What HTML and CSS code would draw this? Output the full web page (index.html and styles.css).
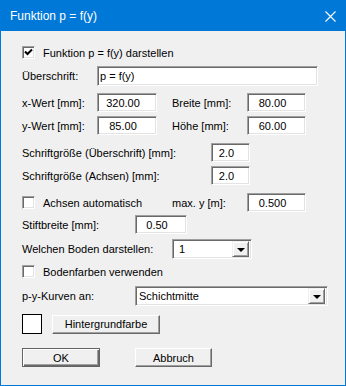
FILE: index.html
```html
<!DOCTYPE html>
<html>
<head>
    <title>Funktion p = f(y)</title>
    <meta http-equiv="content-type" content="text/html; charset=UTF-8"/>
    <link rel="stylesheet" href="styles.css">
</head>
<body>
    <div class="dialog">
        <div class="titlebar">
            <span class="title">Funktion p = f(y)</span>
            <svg class="close" width="11" height="11" viewBox="0 0 11 11">
                <path d="M0.5 0.5 L10.5 10.5 M10.5 0.5 L0.5 10.5" stroke="#fff" stroke-width="1.1" fill="none"/>
            </svg>
        </div>
        <div class="content">
            <div class="row r_check1">
                <span class="check"><svg width="9" height="9" viewBox="0 0 9 9"><path d="M1 3.5 L3.5 6 L8 1.5" stroke="#000" stroke-width="2" fill="none"/></svg></span>
                <span>Funktion p = f(y) darstellen</span>
            </div>
            <div class="row r_head">
                <span class="lbl w75">Überschrift:</span>
                <span class="field f_head">p = f(y)</span>
            </div>
            <div class="row r_x">
                <span class="lbl w75">x-Wert [mm]:</span>
                <span class="field num f60">320.00</span>
                <span class="lbl w75 gap15">Breite [mm]:</span>
                <span class="field num f59">80.00</span>
            </div>
            <div class="row r_y">
                <span class="lbl w75">y-Wert [mm]:</span>
                <span class="field num f60">85.00</span>
                <span class="lbl w75 gap15">Höhe [mm]:</span>
                <span class="field num f59">60.00</span>
            </div>
            <div class="row r_s1">
                <span class="lbl w189">Schriftgröße (Überschrift) [mm]:</span>
                <span class="field num f39">2.0</span>
            </div>
            <div class="row r_s2">
                <span class="lbl w189">Schriftgröße (Achsen) [mm]:</span>
                <span class="field num f39">2.0</span>
            </div>
            <div class="row r_axes">
                <span class="check"></span>
                <span class="lbl w129">Achsen automatisch</span>
                <span class="lbl w75">max. y [m]:</span>
                <span class="field num f59">0.500</span>
            </div>
            <div class="row r_pen">
                <span class="lbl w113">Stiftbreite [mm]:</span>
                <span class="field num f52">0.50</span>
            </div>
            <div class="row r_layer">
                <span class="lbl w150">Welchen Boden darstellen:</span>
                <span class="field combo c80"><span class="combo_text">1</span><span class="drop"><i></i></span></span>
            </div>
            <div class="row r_colors">
                <span class="check"></span>
                <span>Bodenfarben verwenden</span>
            </div>
            <div class="row r_curves">
                <span class="lbl w113">p-y-Kurven an:</span>
                <span class="field combo c193"><span class="combo_text">Schichtmitte</span><span class="drop"><i></i></span></span>
            </div>
            <div class="row r_bg">
                <span class="swatch"></span>
                <span class="btn b_bg">Hintergrundfarbe</span>
            </div>
            <div class="row r_buttons">
                <span class="btn default b_ok">OK</span>
                <span class="btn b_cancel">Abbruch</span>
            </div>
        </div>
    </div>
</body>
</html>
```
FILE: styles.css
```css
body{
    margin: 0;
    font-family: "Liberation Sans", Arial, sans-serif;
    font-size: 11px;
    color: #000;
}
.dialog{
    width: 346px;
    height: 386px;
    box-sizing: border-box;
    border: 1px solid #0078d7;
    background-color: #f0f0f0;
}
.titlebar{
    height: 30px;
    background-color: #0078d7;
    display: flex;
    align-items: center;
    justify-content: space-between;
    padding: 0 9px 0 9px;
    color: #fff;
    font-size: 12px;
}
.titlebar .close{
    margin-top: 0;
}
.content{
    padding: 13px 0 0 21px;
}
.row{
    display: flex;
    align-items: center;
    height: 19px;
}
.r_check1{height: 17px;}
.r_head{margin-top: 5px; height: 20px;}
.r_x{margin-top: 7px;}
.r_y{margin-top: 4px;}
.r_s1{margin-top: 8px;}
.r_s2{margin-top: 4px;}
.r_axes{margin-top: 8px;}
.r_pen{margin-top: 3px;}
.r_layer{margin-top: 5px; height: 20px;}
.r_colors{margin-top: 3px;}
.r_curves{margin-top: 5px; height: 20px;}
.r_bg{margin-top: 8px; height: 20px;}
.r_buttons{margin-top: 14px;}

.lbl{flex: none;}
.w75{width: 75px;}
.w113{width: 113px;}
.w129{width: 129px;}
.w150{width: 150px;}
.w189{width: 189px;}
.gap15{margin-left: 15px;}

.check{
    flex: none;
    width: 13px;
    height: 13px;
    box-sizing: border-box;
    border: 1px solid;
    border-color: #a0a0a0 #fff #fff #a0a0a0;
    box-shadow: inset 1px 1px #696969, inset -1px -1px #e3e3e3;
    background-color: #fff;
    margin-right: 8px;
    display: flex;
    align-items: center;
    justify-content: center;
}
.field{
    flex: none;
    height: 100%;
    box-sizing: border-box;
    border: 1px solid;
    border-color: #a0a0a0 #fff #fff #a0a0a0;
    box-shadow: inset 1px 1px #696969, inset -1px -1px #e3e3e3;
    background-color: #fff;
    display: flex;
    align-items: center;
    white-space: nowrap;
}
.f_head{width: 221px; padding-left: 2px;}
.num{justify-content: center; padding-right: 8px;}
.f60{width: 60px;}
.f59{width: 59px;}
.f52{width: 52px;}
.f39{width: 39px;}
.combo{justify-content: space-between; padding: 0 2px 0 6px;}
.c80{width: 80px;}
.c193{width: 193px; padding-left: 3px;}
.drop{
    width: 17px;
    height: 16px;
    box-sizing: border-box;
    background-color: #f0f0f0;
    border: 1px solid;
    border-color: #f0f0f0 #696969 #696969 #f0f0f0;
    box-shadow: inset 1px 1px #fff, inset -1px -1px #a0a0a0;
    display: flex;
    align-items: center;
    justify-content: center;
}
.drop i{
    width: 0;
    height: 0;
    border-left: 4px solid transparent;
    border-right: 4px solid transparent;
    border-top: 4px solid #000;
    margin-top: 1px;
}
.swatch{
    flex: none;
    width: 20px;
    height: 20px;
    box-sizing: border-box;
    border: 1px solid #000;
    background-color: #fff;
}
.btn{
    flex: none;
    height: 19px;
    box-sizing: border-box;
    border: 1px solid;
    border-color: #fff #696969 #696969 #fff;
    box-shadow: inset -1px -1px #a0a0a0;
    background-color: #f0f0f0;
    display: flex;
    align-items: center;
    justify-content: center;
}
.b_bg{width: 108px; margin-left: 10px;}
.b_ok{width: 78px;}
.b_cancel{width: 77px; margin-left: 35px;}
.btn.default{
    border-color: #646464;
    box-shadow: inset 1px 1px #fff, inset -1px -1px #696969, inset -2px -2px #a0a0a0;
}
```
